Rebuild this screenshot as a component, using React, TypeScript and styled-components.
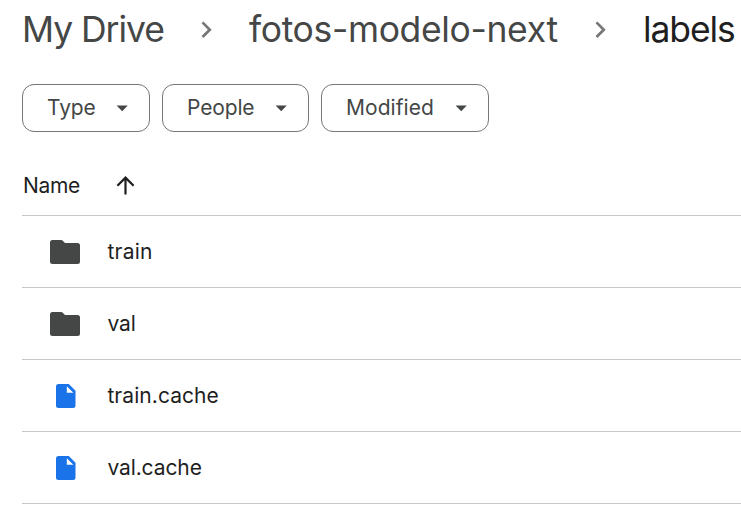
import React from "react";
import styled, { createGlobalStyle } from "styled-components";

const GlobalStyle = createGlobalStyle`
  body { margin: 0; background: #fff; overflow: hidden; }
  * { box-sizing: border-box; }
  svg { display: block; flex: none; }
`;

const Page = styled.main`
  height: 528px;
  padding-left: 22px;
  overflow: hidden;
  font-family: Inter, "Open Sans", sans-serif;
  color: #1f1f1f;
`;

const Breadcrumbs = styled.nav`
  display: flex;
  align-items: center;
  height: 60px;
`;

const Crumb = styled.span<{ $width: number; $spacing: number; $current?: boolean }>`
  flex: none;
  width: ${(p) => p.$width}px;
  font-size: 35.5px;
  line-height: 60px;
  font-weight: 400;
  letter-spacing: ${(p) => p.$spacing}px;
  white-space: nowrap;
  color: ${(p) => (p.$current ? "#1f1f1f" : "#444746")};
`;

const Separator = styled.span`
  display: flex;
  justify-content: center;
  flex: none;
  width: 85px;
  padding-right: 1px;
`;

const Filters = styled.div`
  display: flex;
  gap: 12px;
  margin-top: 24px;
`;

const Chip = styled.button<{ $width: number; $spacing: number }>`
  display: flex;
  align-items: center;
  justify-content: space-between;
  width: ${(p) => p.$width}px;
  height: 48px;
  padding: 0 20px 0 24px;
  border: 1px solid #747775;
  border-radius: 12px;
  background: #fff;
  font: 400 21px/46px Inter, "Open Sans", sans-serif;
  letter-spacing: ${(p) => p.$spacing}px;
  color: #444746;
`;

const TableHead = styled.div`
  display: flex;
  align-items: center;
  height: 84px;
  padding: 24px 0 0 1px;
  border-bottom: 1px solid #c7c7c7;
`;

const Label = styled.span<{ $spacing: number; $width?: number }>`
  width: ${(p) => (p.$width ? `${p.$width}px` : "auto")};
  font-size: 21px;
  line-height: 28px;
  font-weight: 400;
  letter-spacing: ${(p) => p.$spacing}px;
  white-space: nowrap;
`;

const Row = styled.div`
  display: flex;
  align-items: center;
  height: 72px;
  border-bottom: 1px solid #c7c7c7;
`;

const IconCell = styled.span`
  display: flex;
  flex: none;
  width: 85.4px;
  padding-left: 28px;
`;

const Chevron = () => (
  <svg width="12" height="18" viewBox="0 0 12 18">
    <path d="M2.5 1.4 9.8 8.7 2.5 16" fill="none" stroke="#747775" strokeWidth="2.7" />
  </svg>
);

const Caret = () => (
  <svg width="13" height="7" viewBox="0 0 13 7">
    <path d="M.6.5h11.2L6.2 6.3z" fill="#444746" />
  </svg>
);

const SortArrow = () => (
  <svg width="19" height="20" viewBox="0 0 19 20">
    <path d="M9.5 18.4V2M1.4 9.7l8.1-8.1 8.1 8.1" fill="none" stroke="#1f1f1f" strokeWidth="2.2" />
  </svg>
);

const FolderIcon = () => (
  <svg width="30" height="24" viewBox="0 0 30 24">
    <path
      d="M2.5 0h8.6q.9 0 1.5.6L15 3h12.5A2.5 2.5 0 0 1 30 5.5v16a2.5 2.5 0 0 1-2.5 2.5h-25A2.5 2.5 0 0 1 0 21.5v-19A2.5 2.5 0 0 1 2.5 0z"
      fill="#444746"
    />
  </svg>
);

const FileIcon = () => (
  <svg width="32" height="24" viewBox="-6 0 32 24">
    <path
      fillRule="evenodd"
      d="M2.5 0H12.8l6.7 6.8v14.7a2.5 2.5 0 0 1-2.5 2.5H2.5A2.5 2.5 0 0 1 0 21.5v-19A2.5 2.5 0 0 1 2.5 0zM10.8 2.2V8.8h6.6z"
      fill="#1a73e8"
    />
  </svg>
);

const filters = [
  { name: "Type", width: 128, spacing: -0.1 },
  { name: "People", width: 147, spacing: -0.15 },
  { name: "Modified", width: 168, spacing: 0.05 },
];

const items = [
  { name: "train", folder: true, spacing: 0.25 },
  { name: "val", folder: true, spacing: -0.1 },
  { name: "train.cache", folder: false, spacing: 0.07 },
  { name: "val.cache", folder: false, spacing: -0.1 },
];

export default function App() {
  return (
    <Page>
      <GlobalStyle />
      <Breadcrumbs>
        <Crumb $width={142} $spacing={-1.05}>My Drive</Crumb>
        <Separator><Chevron /></Separator>
        <Crumb $width={309} $spacing={-0.35}>fotos-modelo-next</Crumb>
        <Separator><Chevron /></Separator>
        <Crumb $width={98} $spacing={-1.1} $current>labels</Crumb>
      </Breadcrumbs>
      <Filters>
        {filters.map((f) => (
          <Chip key={f.name} $width={f.width} $spacing={f.spacing}>
            {f.name}
            <Caret />
          </Chip>
        ))}
      </Filters>
      <TableHead>
        <Label $spacing={-0.3} $width={93}>Name</Label>
        <SortArrow />
      </TableHead>
      {items.map((item) => (
        <Row key={item.name}>
          <IconCell>{item.folder ? <FolderIcon /> : <FileIcon />}</IconCell>
          <Label $spacing={item.spacing}>{item.name}</Label>
        </Row>
      ))}
    </Page>
  );
}
